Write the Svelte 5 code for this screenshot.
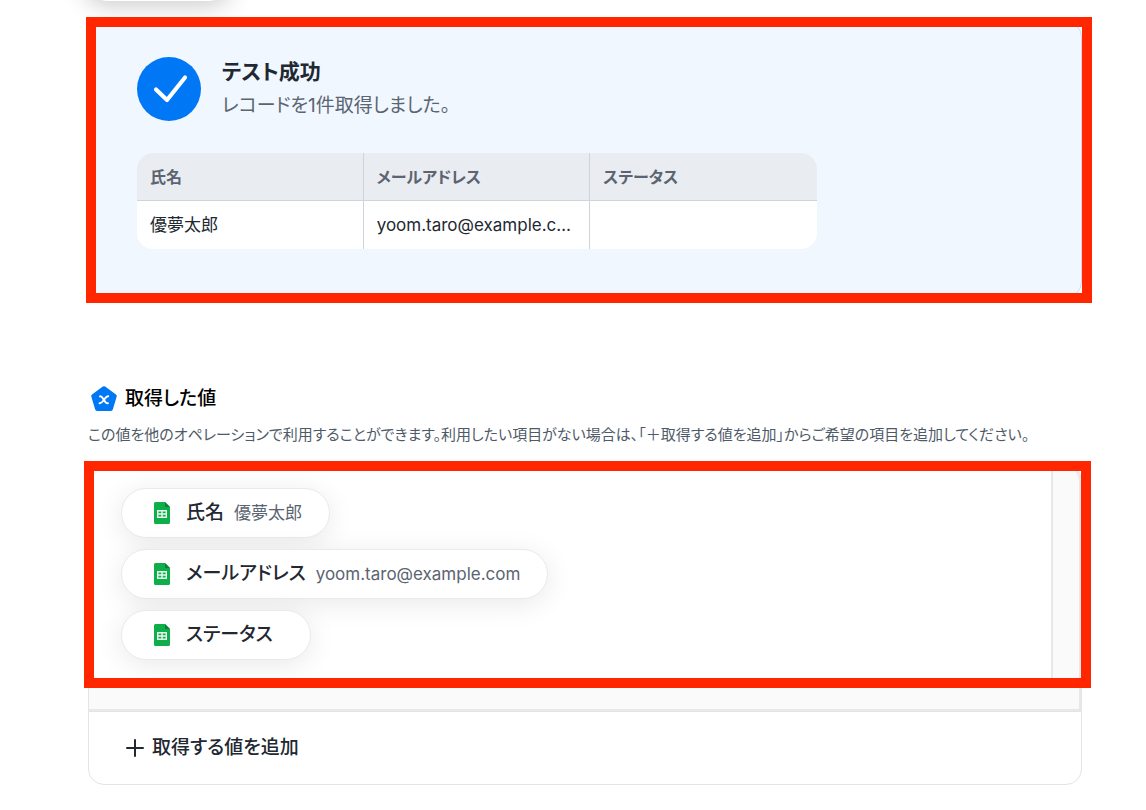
<script>
  const columns = ['氏名', 'メールアドレス', 'ステータス'];
  const record = ['優夢太郎', 'yoom.taro@example.com', ''];
  const outputs = columns.map((label, i) => ({ label, value: record[i] }));
</script>

<main>
  <div class="floating" aria-hidden="true"></div>

  <section class="result marked">
    <header>
      <svg class="check" viewBox="0 0 64 64" aria-hidden="true">
        <circle cx="32" cy="32" r="32" fill="#0077f4" />
        <path d="M19 32.5 30 43 48 20.5" fill="none" stroke="#fff" stroke-width="4.2" stroke-linecap="round" stroke-linejoin="round" />
      </svg>
      <div class="message">
        <h2>テスト成功</h2>
        <p>レコードを1件取得しました。</p>
      </div>
    </header>
    <table>
      <thead>
        <tr>{#each columns as column}<th scope="col">{column}</th>{/each}</tr>
      </thead>
      <tbody>
        <tr>{#each record as cell}<td>{cell}</td>{/each}</tr>
      </tbody>
    </table>
  </section>

  <section class="values">
    <h3>
      <svg viewBox="0 0 26 26" aria-hidden="true">
        <path d="M13 2.2 23.8 10 19.9 23H6.1L2.2 10Z" fill="#0077f4" stroke="#0077f4" stroke-width="4" stroke-linejoin="round" />
        <path d="M9 10.400C12.200 9.200 13 17.700 16.900 17.300M17.200 10.200C14 9.800 12.200 17.700 8.500 17.200" fill="none" stroke="#fff" stroke-width="1.900" stroke-linecap="round" />
      </svg>
      取得した値
    </h3>
    <p class="note">この値を他のオペレーションで利用することができます。利用したい項目がない場合は、「＋取得する値を追加」からご希望の項目を追加してください。</p>

    <div class="panel">
      <div class="scroller marked">
        <ul>
          {#each outputs as { label, value }}
            <li>
              <svg viewBox="0 0 16 22" aria-hidden="true">
                <path d="M1.5 0H11l5 5v15.500a1.500 1.500 0 0 1-1.500 1.500h-13A1.500 1.500 0 0 1 0 20.500v-19A1.500 1.500 0 0 1 1.500 0Z" fill="#0eaf4b" />
                <path d="M11 0 16 5H11Z" fill="#08813a" />
                <path d="M3.700 8.700h8.600v6.600H3.700ZM8 8.700v6.600M3.700 12h8.600" fill="none" stroke="#e8fbee" stroke-width="1.400" />
              </svg>
              <strong>{label}</strong>
              <span>{value}</span>
            </li>
          {/each}
        </ul>
      </div>
      <button type="button">
        <svg viewBox="0 0 18 18" aria-hidden="true">
          <path d="M9 1v16M1 9h16" stroke="#222831" stroke-width="2" stroke-linecap="round" />
        </svg>
        取得する値を追加
      </button>
    </div>
  </section>
</main>

<style>
  :global(body) {
    margin: 0;
    background: #fff;
  }
  main {
    padding: 0 64px 24px 88px;
    font-family: Inter, 'Noto Sans CJK JP', sans-serif;
    font-feature-settings: 'palt';
    color: #222831;
  }
  h2, h3, p, ul {
    margin: 0;
    padding: 0;
  }
  svg {
    flex: none;
    display: block;
  }
  .floating {
    width: 148px;
    height: 48px;
    margin: -47px 0 20px -4px;
    border-radius: 24px;
    background: #fff;
    box-shadow: 0 4px 24px rgba(0, 10, 20, 0.22);
  }

  /* highlight frame laid over a block */
  .marked {
    position: relative;
  }
  .marked::after {
    content: '';
    position: absolute;
    border: 10px solid #ff2600;
    pointer-events: none;
  }

  .result {
    padding: 34px 48px 48px;
    border: 1px solid #d3dae1;
    border-radius: 16px;
    background: #f0f7ff;
  }
  .result::after {
    inset: -5px -11px -6px -3px;
  }
  .result header {
    display: flex;
    align-items: center;
    gap: 21px;
    margin-bottom: 31px;
  }
  .check {
    width: 64px;
    height: 64px;
  }
  .message {
    display: grid;
    gap: 2px;
  }
  h2 {
    font-size: 21px;
    line-height: 32px;
    font-weight: 700;
  }
  header p {
    font-size: 19px;
    line-height: 32px;
    color: #5b6470;
  }
  table {
    width: 100%;
    max-width: 680px;
    table-layout: fixed;
    border-collapse: separate;
    border-spacing: 0;
    border-radius: 16px;
    overflow: hidden;
    background: #fff;
    font-size: 16px;
    line-height: 24px;
    text-align: left;
  }
  th, td {
    padding: 12px 13px;
    height: 24px;
    border-right: 1px solid #ced4dc;
    overflow: hidden;
    text-overflow: ellipsis;
    white-space: nowrap;
  }
  th {
    padding-bottom: 11px;
    border-bottom: 1px solid #ced4dc;
    background: #e9ecf1;
    color: #5b6470;
    font-weight: 700;
  }
  td {
    font-size: 17px;
  }
  th:last-child, td:last-child {
    border-right: 0;
  }

  .values {
    margin-top: 85px;
  }
  h3 {
    display: flex;
    align-items: center;
    gap: 8px;
    padding-left: 3px;
    font-size: 19px;
    line-height: 32px;
    font-weight: 500;
    color: #000;
  }
  h3 svg {
    width: 26px;
    height: 26px;
  }
  .note {
    margin-bottom: 18px;
    padding-top: 8px;
    font-size: 15px;
    line-height: 24px;
    color: #4f5a68;
  }
  .panel {
    border: 1px solid #e4e4e4;
    border-radius: 16px;
  }
  .scroller {
    padding: 0 26px 26px 0;
    border-right: 2px solid #e8e8e8;
    border-bottom: 2px solid #e8e8e8;
    border-radius: 16px 16px 0 0;
    background: #fafafa;
  }
  .scroller::after {
    inset: -5px -12px 21px -5px;
  }
  ul {
    display: flex;
    flex-direction: column;
    align-items: flex-start;
    gap: 11px;
    padding: 22px 32px 23px;
    border-right: 2px solid #e8e8e8;
    background: #fff;
    list-style: none;
  }
  li {
    display: flex;
    align-items: center;
    padding: 0 27px 0 32px;
    border: 1px solid #e9eaee;
    border-radius: 25px;
    background: #fff;
    box-shadow: 0 5px 28px rgba(0, 0, 0, 0.09);
    line-height: 48px;
  }
  li svg {
    width: 16px;
    height: 22px;
    margin-right: 16px;
  }
  strong {
    margin-right: 10px;
    font-size: 19px;
    font-weight: 500;
  }
  li span {
    font-size: 17px;
    color: #5b6470;
  }
  button {
    display: flex;
    align-items: center;
    gap: 8px;
    width: 100%;
    padding: 20px 37px;
    border: 0;
    border-top: 1px solid #e4e4e4;
    background: none;
    color: inherit;
    font: 500 19px/32px Inter, 'Noto Sans CJK JP', sans-serif;
    font-feature-settings: 'palt';
    cursor: pointer;
  }
  button svg {
    width: 18px;
    height: 18px;
  }
</style>
